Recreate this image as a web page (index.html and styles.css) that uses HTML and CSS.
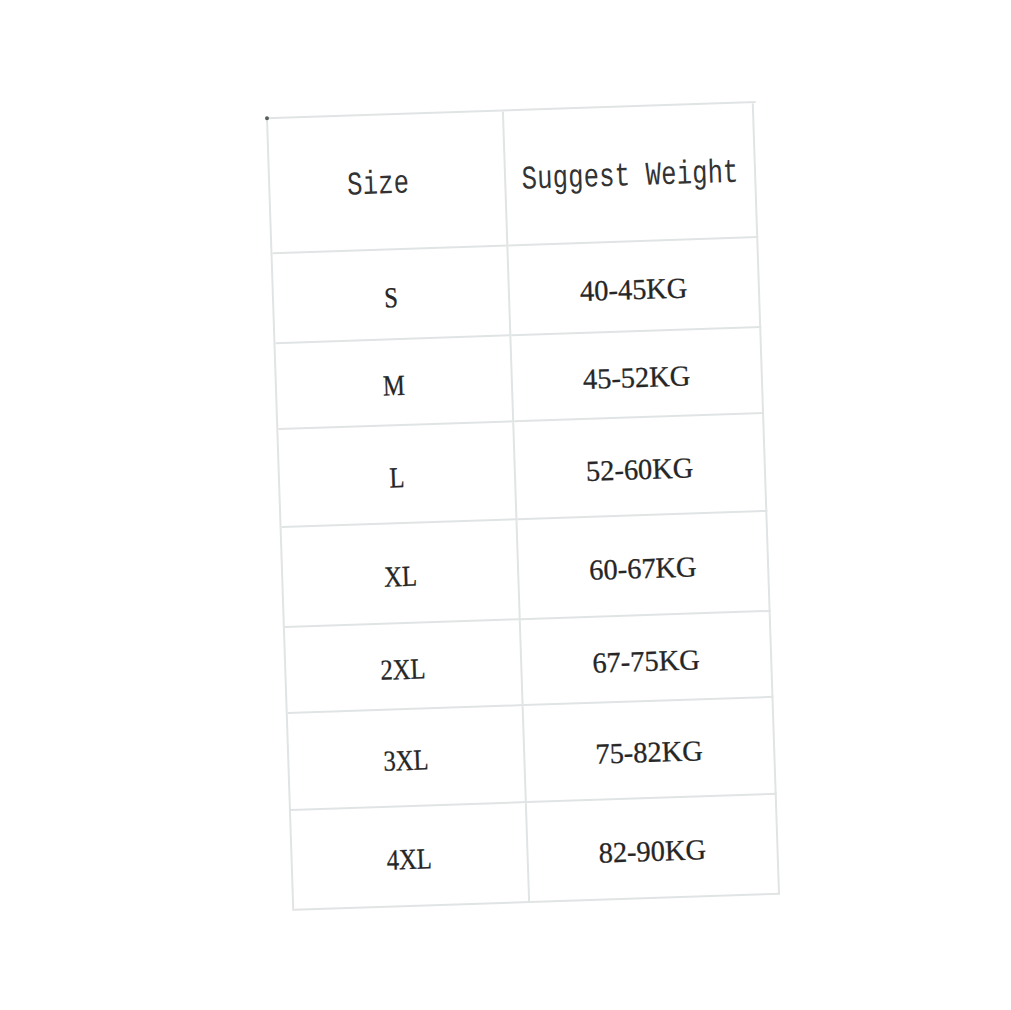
FILE: index.html
```html
<!DOCTYPE html>
<html lang="en">
<head>
<meta charset="utf-8">
<title>Size chart</title>
<link rel="stylesheet" href="styles.css">
</head>
<body>
<main class="page">
  <div class="chart">
    <div class="cell head r-head"><span class="mono size-label">Size</span></div>
    <div class="cell head r-head"><span class="mono">Suggest Weight</span></div>

    <div class="cell r1"><span class="sz">S</span></div>
    <div class="cell r1"><span class="val">40-45KG</span></div>

    <div class="cell r2"><span class="sz">M</span></div>
    <div class="cell r2"><span class="val">45-52KG</span></div>

    <div class="cell r3"><span class="sz">L</span></div>
    <div class="cell r3"><span class="val">52-60KG</span></div>

    <div class="cell r4"><span class="sz">XL</span></div>
    <div class="cell r4"><span class="val">60-67KG</span></div>

    <div class="cell r5"><span class="sz">2XL</span></div>
    <div class="cell r5"><span class="val">67-75KG</span></div>

    <div class="cell r6"><span class="sz">3XL</span></div>
    <div class="cell r6"><span class="val">75-82KG</span></div>

    <div class="cell r7"><span class="sz">4XL</span></div>
    <div class="cell r7"><span class="val">82-90KG</span></div>
  </div>
</main>
</body>
</html>
```

FILE: styles.css
```css
html, body {
  margin: 0;
  padding: 0;
  background: #ffffff;
}

.page {
  min-height: 1010px;
  box-sizing: border-box;
  padding: 109px 0 60px 279px;
}

.chart {
  position: relative;
  width: 488px;
  display: grid;
  grid-template-columns: 236px 250px;
  grid-template-rows: 135px 90px 86px 98px 100px 86px 97px 100px;
  border-top: 2px solid #e1e4e5;
  border-left: 2px solid #e1e4e5;
  transform: rotate(-1.9deg);
  background: #ffffff;
  color: #262626;
}

.chart::before {
  content: "";
  position: absolute;
  left: -3px;
  top: -3px;
  width: 4px;
  height: 4px;
  border-radius: 50%;
  background: #56615d;
}

.cell {
  box-sizing: border-box;
  border-right: 2px solid #e1e4e5;
  border-bottom: 2px solid #e1e4e5;
  display: flex;
  align-items: center;
  justify-content: center;
  padding-top: 6px;
}

.mono {
  display: inline-block;
  font-family: "Liberation Mono", "DejaVu Sans Mono", monospace;
  font-size: 25.5px;
  letter-spacing: 0.2px;
  transform: scaleY(1.3);
  color: #333333;
}

.size-label {
  margin-right: 18px;
}

.sz,
.val {
  display: inline-block;
  font-family: "Liberation Serif", "DejaVu Serif", serif;
  font-size: 29px;
  -webkit-text-stroke: 0.3px #262626;
}

.sz {
  transform: scaleX(0.85);
}

.val {
  transform: scaleX(0.98);
}
```
